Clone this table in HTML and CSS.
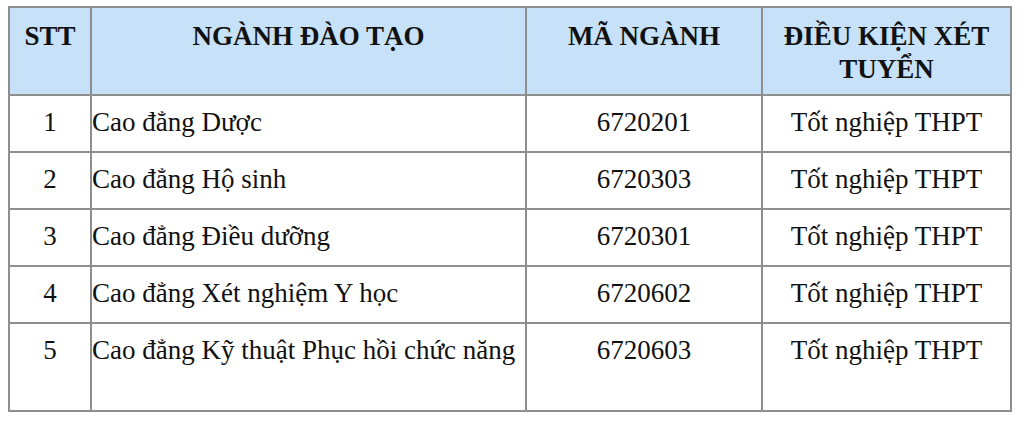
FILE: index.html
```html
<!DOCTYPE html>
<html lang="vi">
<head>
<meta charset="utf-8">
<link rel="stylesheet" href="styles.css">
</head>
<body>
<table class="grid">
  <colgroup>
    <col class="c-stt"><col class="c-name"><col class="c-code"><col class="c-cond">
  </colgroup>
  <thead>
    <tr>
      <th>STT</th>
      <th>NGÀNH ĐÀO TẠO</th>
      <th>MÃ NGÀNH</th>
      <th>ĐIỀU KIỆN XÉT TUYỂN</th>
    </tr>
  </thead>
  <tbody>
    <tr><td class="center">1</td><td>Cao đẳng Dược</td><td class="center">6720201</td><td class="center">Tốt nghiệp THPT</td></tr>
    <tr><td class="center">2</td><td>Cao đẳng Hộ sinh</td><td class="center">6720303</td><td class="center">Tốt nghiệp THPT</td></tr>
    <tr><td class="center">3</td><td>Cao đẳng Điều dưỡng</td><td class="center">6720301</td><td class="center">Tốt nghiệp THPT</td></tr>
    <tr><td class="center">4</td><td>Cao đẳng Xét nghiệm Y học</td><td class="center">6720602</td><td class="center">Tốt nghiệp THPT</td></tr>
    <tr class="last"><td class="center">5</td><td>Cao đẳng Kỹ thuật Phục hồi chức năng</td><td class="center">6720603</td><td class="center">Tốt nghiệp THPT</td></tr>
  </tbody>
</table>
</body>
</html>
```

FILE: styles.css
```css
html, body {
  margin: 0;
  padding: 0;
  background: #ffffff;
}
body {
  padding: 6px 0 0 8px;
  font-family: "Liberation Serif", "Times New Roman", serif;
  color: #111111;
}
.grid {
  border-collapse: collapse;
  width: 1002px;
  table-layout: fixed;
}
.c-stt { width: 82px; }
.c-name { width: 435px; }
.c-code { width: 236px; }
.c-cond { width: 249px; }

.grid th, .grid td {
  border: 2px solid #8e8e8e;
  vertical-align: top;
}
.grid th {
  background: #c6e1f8;
  font-weight: bold;
  font-size: 27px;
  line-height: 33px;
  height: 88px;
  box-sizing: border-box;
  padding: 12px 4px 0;
  text-align: center;
}
.grid td {
  font-size: 27px;
  line-height: 30px;
  height: 57px;
  box-sizing: border-box;
  padding: 11px 0 0;
  text-align: left;
}
.grid td.center { text-align: center; }
.grid tr.last td { height: 88px; }
```
